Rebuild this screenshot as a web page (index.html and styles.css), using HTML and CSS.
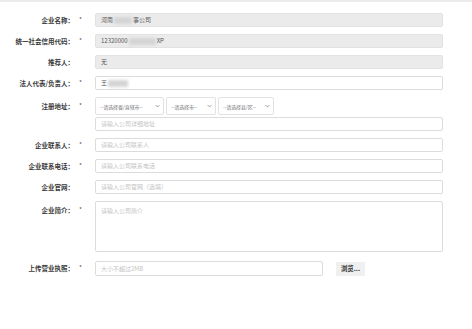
FILE: index.html
```html
<!DOCTYPE html>
<html lang="zh-CN">
<head>
<meta charset="utf-8">
<link rel="stylesheet" href="styles.css">
</head>
<body>
<div class="topline"></div>
<form class="form">
  <div class="row">
    <label class="lbl">企业名称：</label><span class="star">*</span>
    <div class="field"><div class="inp disabled">河南<span class="blur w18"></span>事公司</div></div>
  </div>
  <div class="row">
    <label class="lbl">统一社会信用代码：</label><span class="star">*</span>
    <div class="field"><div class="inp disabled">12320000<span class="blur w28"></span>XP</div></div>
  </div>
  <div class="row">
    <label class="lbl">推荐人：</label><span class="star"></span>
    <div class="field"><div class="inp disabled">无</div></div>
  </div>
  <div class="row">
    <label class="lbl">法人代表/负责人：</label><span class="star">*</span>
    <div class="field"><div class="inp">王<span class="blur w20"></span></div></div>
  </div>
  <div class="row">
    <label class="lbl tall">注册地址：</label><span class="star tall">*</span>
    <div class="field col">
      <div class="selects">
        <div class="sel s1">--请选择省/直辖市--<svg class="chev" viewBox="0 0 8 5"><path d="M1 1l3 3 3-3" fill="none" stroke="#666" stroke-width="1"/></svg></div>
        <div class="sel s2">--请选择市--<svg class="chev" viewBox="0 0 8 5"><path d="M1 1l3 3 3-3" fill="none" stroke="#666" stroke-width="1"/></svg></div>
        <div class="sel s3">--请选择县/区--<svg class="chev" viewBox="0 0 8 5"><path d="M1 1l3 3 3-3" fill="none" stroke="#666" stroke-width="1"/></svg></div>
      </div>
      <div class="inp ph short">请输入公司详细地址</div>
    </div>
  </div>
  <div class="row">
    <label class="lbl">企业联系人：</label><span class="star">*</span>
    <div class="field"><div class="inp ph">请输入公司联系人</div></div>
  </div>
  <div class="row">
    <label class="lbl">企业联系电话：</label><span class="star">*</span>
    <div class="field"><div class="inp ph">请输入公司联系电话</div></div>
  </div>
  <div class="row">
    <label class="lbl">企业官网：</label><span class="star"></span>
    <div class="field"><div class="inp ph">请输入公司官网（选填）</div></div>
  </div>
  <div class="row">
    <label class="lbl top">企业简介：</label><span class="star top">*</span>
    <div class="field"><textarea class="area" placeholder="请输入公司简介"></textarea></div>
  </div>
  <div class="row upload">
    <label class="lbl">上传营业执照：</label><span class="star">*</span>
    <div class="field filefield">
      <div class="inp ph file">大小不超过2MB</div>
      <span class="browse">浏览...</span>
    </div>
  </div>
</form>
</body>
</html>
```

FILE: styles.css
```css
html, body {
  margin: 0;
  padding: 0;
  background: #fff;
}
body {
  width: 472px;
  height: 329px;
  overflow: hidden;
  font-family: "Noto Sans CJK SC", "Noto Sans", sans-serif;
  color: #333;
}
.topline {
  height: 2px;
  background: #ececec;
}
.form {
  display: flex;
  flex-direction: column;
  gap: 7px;
  padding-top: 11px;
}
.row {
  display: flex;
  align-items: flex-start;
}
.row.upload {
  margin-top: 2px;
}
.lbl {
  width: 74px;
  text-align: right;
  font-size: 6.5px;
  font-weight: 700;
  line-height: 14px;
  color: #3a3a3a;
  white-space: nowrap;
}
.star {
  width: 21px;
  font-size: 6.4px;
  line-height: 14px;
  color: #555;
  padding-left: 5px;
  box-sizing: border-box;
}
.lbl.tall, .star.tall {
  line-height: 18px;
}
.lbl.top, .star.top {
  line-height: 18px;
}
.field {
  width: 348px;
}
.field.col {
  display: flex;
  flex-direction: column;
  gap: 2px;
}
.inp {
  height: 14px;
  box-sizing: border-box;
  border: 1px solid #dcdcdc;
  border-radius: 2px;
  background: #fff;
  font-size: 6px;
  line-height: 12px;
  padding-left: 5px;
  color: #555;
  display: flex;
  align-items: center;
  white-space: nowrap;
}
.inp.disabled {
  background: #ebebeb;
  border-color: #e2e2e2;
}
.inp.ph {
  color: #c4c4c4;
}
.blur {
  display: inline-block;
  height: 7px;
  background: #d4d4d4;
  filter: blur(1.5px);
  margin: 0 1px;
}
.w18 { width: 18px; }
.w28 { width: 27px; }
.w20 { width: 20px; }
.selects {
  display: flex;
  gap: 2px;
}
.sel {
  height: 18px;
  box-sizing: border-box;
  border: 1px solid #e2e2e2;
  border-radius: 2px;
  font-size: 5px;
  letter-spacing: -0.1px;
  color: #777;
  display: flex;
  align-items: center;
  justify-content: space-between;
  padding: 0 3px 0 4px;
  white-space: nowrap;
  background: #fff;
}
.s1 { width: 69px; }
.s2 { width: 50px; }
.s3 { width: 56px; }
.chev {
  width: 5px;
  height: 4px;
  flex: none;
  margin-left: 2px;
}
.area {
  display: block;
  width: 348px;
  height: 51px;
  box-sizing: border-box;
  border: 1px solid #dcdcdc;
  border-radius: 2px;
  font-family: "Noto Sans CJK SC", "Noto Sans", sans-serif;
  font-size: 6px;
  padding: 4px 5px;
  margin: 0;
  resize: none;
}
.area::placeholder {
  color: #c4c4c4;
}
.filefield {
  display: flex;
  align-items: center;
  gap: 13px;
}
.inp.file {
  width: 228px;
  height: 15px;
}
.browse {
  height: 14px;
  width: 29px;
  background: #f0f0f0;
  font-size: 6.4px;
  line-height: 14px;
  text-align: center;
  color: #333;
  font-weight: 700;
}
```
